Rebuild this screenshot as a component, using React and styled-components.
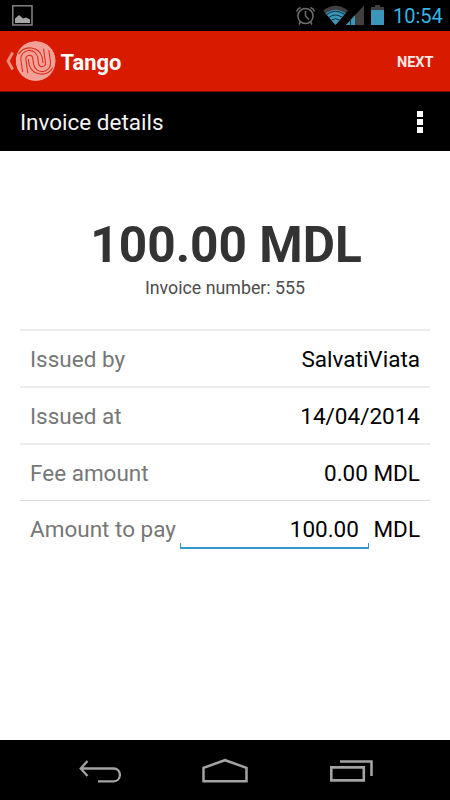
import styled, { createGlobalStyle } from "styled-components";

const details = [
  { label: "Issued by", value: "SalvatiViata" },
  { label: "Issued at", value: "14/04/2014" },
  { label: "Fee amount", value: "0.00 MDL" },
];

const App = () => {
  return (
    <Screen>
      <GlobalStyle />
      <StatusBar>
        <PictureIcon />
        <StatusIcons />
        <Clock>10:54</Clock>
      </StatusBar>
      <ActionBar>
        <Logo />
        <AppName>Tango</AppName>
        <NextButton>NEXT</NextButton>
      </ActionBar>
      <TitleBar>
        <Title>Invoice details</Title>
        <MenuButton aria-label="More options">
          <Dot />
          <Dot />
          <Dot />
        </MenuButton>
      </TitleBar>
      <Main>
        <Total>100.00 MDL</Total>
        <InvoiceNumber>Invoice number: 555</InvoiceNumber>
        <List>
          {details.map(({ label, value }) => (
            <Row key={label}>
              <Label>{label}</Label>
              <Value>{value}</Value>
            </Row>
          ))}
          <Row $sharp>
            <Label>Amount to pay</Label>
            <Field>
              <Input defaultValue="100.00" aria-label="Amount to pay" />
            </Field>
            <Value>MDL</Value>
          </Row>
        </List>
      </Main>
      <NavBar />
    </Screen>
  );
};

export default App;

const PictureIcon = () => (
  <svg width="21" height="21" viewBox="0 0 21 21">
    <rect x="0.8" y="0.8" width="19.2" height="19.2" fill="none" stroke="#8c8c8c" strokeWidth="1.4" />
    <path d="M3 18V13.5L7 10L11 13.5L14 12.5L18 14.5V18Z" fill="#a6a6a6" />
  </svg>
);

const StatusIcons = () => (
  <Icons width="92" height="31" viewBox="294 0 92 31">
    <g fill="none" stroke="#6e6e6e" strokeWidth="1.5">
      <circle cx="305.5" cy="16" r="7.6" />
      <path d="M305.5 11V16L309 19.5M296.5 11.5Q297.5 8.5 300.5 7.5M314.5 11.5Q313.5 8.5 310.5 7.5M300.5 22L299 24.5M310.5 22L312 24.5" />
    </g>
    <path d="M323 10.5Q335.5 1 348 10.5L335.5 25Z" fill="#404040" />
    <path d="M325.5 13.3Q335.5 6 345.5 13.3L335.5 25Z" fill="#3a96bb" />
    <path d="M326.5 14.5Q335.5 8 344.5 14.5M329 17.2Q335.5 12.7 342 17.2M331.5 20Q335.5 17.3 339.5 20" fill="none" stroke="#06222e" strokeWidth="0.9" />
    <path d="M346 25L364 5.5V25Z" fill="#404040" />
    <path d="M346 25L355 15.2V25Z" fill="#3a96bb" />
    <path d="M350.5 19V25" stroke="#102c38" strokeWidth="1" />
    <path d="M371 10V7H375V5H380V7H384V10Z" fill="#404040" />
    <path d="M371 10H384V25H371Z" fill="#3a96bb" />
  </Icons>
);

const Logo = () => (
  <svg width="60.5" height="60" viewBox="0 31 60.5 60">
    <path d="M12.7 52.5L8 61L12.7 69.5" fill="none" stroke="#ee8b80" strokeWidth="2.8" />
    <clipPath id="disc">
      <circle cx="35.7" cy="61" r="20" />
    </clipPath>
    <g clipPath="url(#disc)">
      <circle cx="35.7" cy="61" r="20" fill="#f3a198" />
      <g transform="translate(35.7 61) rotate(-8)" fill="none" stroke="#dc2c14" strokeWidth="1.05">
        <path d="M-9.5 11V-3A3.5 3.5 0 0 1 -2.5 -3V3A8.5 8.5 0 0 0 14.5 3V-9" />
        <path d="M-14.5 9V-3A8.5 8.5 0 0 1 2.5 -3V3A3.5 3.5 0 0 0 9.5 3V-11" />
        <path d="M-16 -9A13 13 0 0 1 7 -3V3" />
        <path d="M16 9A13 13 0 0 1 -7 3V-3" />
      </g>
    </g>
  </svg>
);

const NavBar = () => (
  <Nav>
    <svg width="42" height="24" viewBox="79 759 42 24" fill="none" stroke="#a3a3a3" strokeWidth="2.3">
      <path d="M87.5 761L80.7 768.5L87.5 776M81 768.5H113.5C122 768.5 122 781.3 113.5 781.3H98" />
    </svg>
    <svg width="48" height="26" viewBox="201 758 48 26" fill="none" stroke="#a3a3a3" strokeWidth="2.5">
      <path d="M203.5 781.3V767.8L225 760.2L246.5 767.8V781.3Z" />
    </svg>
    <svg width="44" height="24" viewBox="329 760 44 24" fill="none" stroke="#a3a3a3" strokeWidth="2.6">
      <path d="M331.3 768.4H363.8V781.4H331.3ZM340 762.5H371.5V777" />
    </svg>
  </Nav>
);

const GlobalStyle = createGlobalStyle`
  * {
    box-sizing: border-box;
  }
  body {
    margin: 0;
    font-family: Roboto, "Liberation Sans", sans-serif;
  }
`;
const Screen = styled.div`
  display: flex;
  flex-direction: column;
  width: 450px;
  height: 800px;
  overflow: hidden;
  background-color: #fff;
`;
const StatusBar = styled.div`
  display: flex;
  align-items: center;
  height: 31px;
  padding: 0 7px 0 12px;
  background-color: #000;
`;
const Icons = styled.svg`
  margin-left: auto;
`;
const Clock = styled.span`
  width: 50px;
  margin-left: 7px;
  padding-top: 2px;
  font-size: 20px;
  line-height: 31px;
  white-space: nowrap;
  color: #33b5e5;
`;
const ActionBar = styled.header`
  display: flex;
  align-items: center;
  height: 61px;
  padding-right: 16.5px;
  border-bottom: 1px solid #7d1000;
  background-color: #d81b00;
  color: #fff;
`;
const AppName = styled.span`
  font-size: 21.9px;
  font-weight: 700;
  line-height: 60px;
  padding-top: 3px;
`;
const NextButton = styled.button`
  margin-left: auto;
  padding: 2px 0 0;
  border: 0;
  background: none;
  font: 700 14.5px Roboto, sans-serif;
  color: #fbe8e5;
`;
const TitleBar = styled.div`
  display: flex;
  align-items: center;
  justify-content: space-between;
  height: 59px;
  padding: 0 27px 0 20px;
  background-color: #000;
`;
const Title = styled.h1`
  margin: 0;
  font-size: 22.5px;
  font-weight: 400;
  color: #f3f3f3;
`;
const MenuButton = styled.button`
  display: flex;
  flex-direction: column;
  gap: 2px;
  padding: 0;
  border: 0;
  background: none;
`;
const Dot = styled.span`
  width: 6px;
  height: 6px;
  background-color: #fff;
`;
const Main = styled.main`
  display: flex;
  flex: 1;
  flex-direction: column;
  padding: 63px 20px 0;
`;
const Total = styled.div`
  height: 60px;
  padding-left: 2px;
  font-size: 49.6px;
  font-weight: 700;
  line-height: 62px;
  text-align: center;
  white-space: nowrap;
  color: #333;
`;
const InvoiceNumber = styled.div`
  height: 55px;
  font-size: 17.8px;
  line-height: 28px;
  text-align: center;
  color: #4d4d4d;
`;
const List = styled.div`
  display: flex;
  flex-direction: column;
`;
const Row = styled.div`
  display: flex;
  align-items: center;
  height: 57px;
  padding: ${({ $sharp }) => ($sharp ? "0" : "1px")} 10px 0;
  border-top: ${({ $sharp }) => ($sharp ? "1px solid #dcdcdc" : "2px solid #ececec")};
`;
const Label = styled.span`
  font-size: 22.5px;
  white-space: nowrap;
  color: #777;
`;
const Value = styled.span`
  margin-left: auto;
  font-size: 22.5px;
  white-space: nowrap;
  color: #000;
`;
const Field = styled.div`
  display: flex;
  flex-direction: column;
  justify-content: flex-end;
  width: 189px;
  height: 39px;
  margin-left: 4px;
  /* short side ticks that rise from the underline */
  background:
    linear-gradient(#3498cb, #3498cb) left bottom / 1px 6px no-repeat,
    linear-gradient(#3498cb, #3498cb) right bottom / 1px 6px no-repeat,
    linear-gradient(#3498cb, #3498cb) left bottom / 100% 2px no-repeat;
`;
const Input = styled.input`
  width: 100%;
  height: 39px;
  padding: 0 10px 0 0;
  border: 0;
  outline: 0;
  background: none;
  font: 400 22.5px Roboto, sans-serif;
  text-align: right;
  color: #000;
`;
const Nav = styled.nav`
  display: flex;
  align-items: center;
  justify-content: space-between;
  height: 60px;
  padding: 2px 77px 0 79px;
  background-color: #000;
`;
